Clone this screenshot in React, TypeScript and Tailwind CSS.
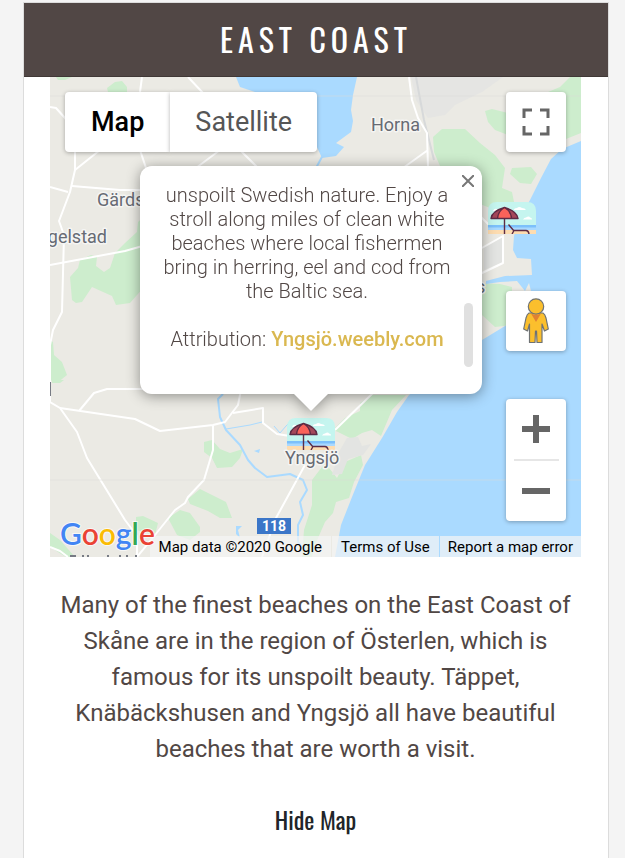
import React from "react";

const narrow = "font-['Oswald','Liberation_Sans_Narrow','Roboto_Condensed',sans-serif]";

function BeachMarker({ x, y }: { x: number; y: number }) {
  return (
    <svg x={x} y={y} width="48" height="32" viewBox="0 0 48 32">
      <path d="M0 32V9Q0 0 9 0H39Q48 0 48 9V32Z" fill="#c5f5ef" />
      <path d="M0 23H48V28H0Z" fill="#7cc0fb" />
      <path d="M0 25.500H48V28H0Z" fill="#a9d9ff" />
      <path d="M0 28H48V32H0Z" fill="#fddcb0" />
      <path d="M26 8q0-2 3-2q2-2 5 0q3 0 4 2zM35 17.500q1-2 3-2q3-2 4 0q2 0 2 2zM5 9q1-3 4-2l3 2z" fill="#fff" />
      <path d="M3 16.500Q4 9 16.500 5.500Q29 9 30 16.500Z" fill="#dd5a52" />
      <path d="M3 16.500Q4 9 16.500 5.500Q8 10 9.500 16.500ZM30 16.500Q29 9 16.500 5.500Q25 10 23.500 16.500Z" fill="#a4475a" />
      <path d="M9.500 16.500Q10 9 16.500 5.500Q23 9 23.500 16.500Z" fill="#f9625a" />
      <g fill="none" stroke="#5d2b45" strokeWidth="1.400" strokeLinejoin="round">
        <path d="M3 16.500Q4 9 16.500 5.500Q29 9 30 16.500ZM9.500 16.500Q10 9 16.500 5.500Q23 9 23.500 16.500" />
        <path d="M16.500 16V32M20.500 22.500L26 29M24 32L26 28.500H38Q40.500 28.500 41 32" />
      </g>
    </svg>
  );
}

function MapCanvas() {
  return (
    <svg
      className="absolute inset-0 h-full w-full"
      viewBox="50 77 531 480"
      preserveAspectRatio="xMinYMin slice"
      role="img"
      aria-label="Map of beaches around Yngsjö"
    >
      <rect x="50" y="77" width="1200" height="900" fill="#ebeae4" />
      <path d="M411 77H503L482 92L455 105L445 115L428 118L416 100Z" fill="#e5e5e3" />
      <g fill="#cdedcd">
        <path d="M570 77L560 87L548 92L540 100L545 125L566 139L581 133V77Z" />
        <path d="M485 111L492 109L508 113V135L495 130L488 122Z" />
        <path d="M433 137L442 129L465 129L480 143L495 155L505 168L502 188L512 192L514 202L508 208H490L470 200V166H440L434 152Z" />
        <path d="M512 168L531 167L537 174L531 184L520 183L510 174Z" />
        <path d="M476 283L500 284L512 287V325L495 327L482 315Z" />
        <path d="M146 215L138 222L137 232L125 243L115 253L110 268L104 272L96 266L97 257L91 255L80 260L78 268L70 277L72 300L76 303L82 302L92 287L112 296L116 305L130 303L137 295L146 285Z" />
        <path d="M50 340L53 342L54 355L62 362L67 375L57 383L50 380Z" />
        <path d="M107 88L115 82L122 81L127 87V92H108ZM56 77H72L65 80H58ZM52 380H64L60 383H52Z" />
        <path d="M204 442L212 440L220 449L230 453L243 449L240 458L232 467L217 468L212 458L204 452Z" />
        <path d="M188 499L200 489L210 494L226 502L232 518L220 518L208 511L190 504Z" />
        <path d="M168 518L180 510L190 513L200 527V532L190 540L177 535Z" />
        <path d="M136 517L143 516L158 523L155 535L136 530ZM50 533L60 540L75 557H66L50 547Z" />
        <path d="M372 395H406L392 410L381 436L372 430L362 433L352 439L338 432L333 430L345 418L360 411L360 403Z" />
        <path d="M325 463L337 478L345 462L361 455L363 465L354 482L349 498L336 502L333 513L325 522L315 545L312 557H302L304 530L312 505L312 480Z" />
      </g>
      <path d="M339 452L347 438L358 437L362 446L371 444L363 455L348 459L342 474L332 475Z" fill="#e3e4e2" />
      <g fill="#aadaff">
        <path d="M236 77L240 87L255 92L305 110L316 145L322 158L336 156L344 147L336 143L351 132L353 121L351 110L353 95L357 77Z" />
        <path d="M581 141L562 149L551 159L541 178L530 200L519 220L514 236L513 250L517 258L531 259L532 275L505 276L486 281L486 284L500 282L517 281L525 291L529 283L531 291L510 323L482 340L409 395L397 412L382 438L365 465L352 497L341 525L335 557H1250V141Z" />
        <path d="M254 451L260 449L259 453ZM236 526L242 526L238 530L240 538L236 534Z" />
      </g>
      <g fill="none" stroke="#aadaff" strokeWidth="2" strokeLinejoin="round">
        <path d="M323 155L316 168M223 394L218 399L220 417L226 430L240 445L248 460L255 468L267 477L290 474L303 480L307 490L300 502L303 515L298 525L298 542L305 550" />
        <path d="M226 429L250 425L262 422M274 426L280 433L286 426L292 420" strokeWidth="1" />
      </g>
      <path d="M484 248L503 237V262L484 270Z" fill="#e3e4e2" />
      <path d="M416 77L424 120L434 160" fill="none" stroke="#d7d9da" strokeWidth="2" />
      <g fill="none" stroke="#fff" strokeWidth="2" strokeLinejoin="round">
        <path d="M75 150V170L70 192L59 221L64 235L62 312L53 330L50 345V402L60 408L77 432L87 458L125 520L137 536V557" />
        <path d="M100 150L75 170M50 187L68 192M72 186L120 190H146M140 150L146 168M220 150L196 168M240 150L258 168" />
        <path d="M50 265L125 251L146 245M50 107L56 108L65 118L70 126M142 77L140 92M188 77L203 93" />
        <path d="M60 408L135 419L160 431L213 425L225 422L238 405L241 390M79 411L94 393L107 389H146M213 425V450L204 480L188 497L185 503L175 510L155 535L137 557" />
        <path d="M233 413L263 408V423L277 434L290 436M305 465L276 518L262 557M376 390L335 430M50 547L60 551L68 557" />
        <path d="M409 77L412 100L418 118L427 133L428 168M428 150L403 168M480 216L490 226M480 249L503 236V263L480 274" />
      </g>
      <path d="M50 96H581M50 480H581" stroke="#dddeda" strokeOpacity=".5" />
      <path d="M50 382V396" stroke="#777b84" strokeWidth="2" />
      <path d="M70 556H76M83 555V557M88 555V557M108 555V557M120 555V557M127 555V557M136 555V557" stroke="#777b84" strokeWidth="2" />
      <BeachMarker x={488} y={202} />
      <BeachMarker x={287} y={418} />
      <g
        className="font-['Roboto',sans-serif]"
        fontSize="18"
        fill="#676b74"
        stroke="#f5f5f3"
        strokeWidth="3"
        strokeLinejoin="round"
        paintOrder="stroke"
      >
        <text x="97" y="206">Gärds</text>
        <text x="107" y="243" textAnchor="end">gelstad</text>
        <text x="371" y="131">Horna</text>
        <text x="285" y="464">Yngsjö</text>
        <text x="476" y="293">s</text>
      </g>
      <rect x="257" y="518" width="34" height="16" fill="#3b76c8" />
      <text x="274" y="531" textAnchor="middle" className="font-['Roboto',sans-serif] font-bold" fontSize="14" fill="#fff">
        118
      </text>
    </svg>
  );
}

function FullscreenIcon() {
  return (
    <svg width="28" height="28" viewBox="0 0 28 28" fill="none" stroke="#666" strokeWidth="3" aria-hidden="true">
      <path d="M2 10V2H10M18 2H26V10M26 18V26H18M10 26H2V18" />
    </svg>
  );
}

function PegmanIcon() {
  return (
    <svg width="26" height="46" viewBox="0 0 26 46" aria-hidden="true">
      <g fill="#fbbf2d" stroke="#6f7273" strokeWidth="1.200" strokeLinejoin="round">
        <path d="M6 15H20Q22 16 23 20L25.300 31L21.500 33L19 26V44.500H14L13.500 33H12.500L12 44.500H6.500V26L4.500 33L.700 31L3 20Q4 16 6 15Z" />
        <circle cx="13" cy="8.500" r="7.700" />
      </g>
      <path d="M8 15.500Q13 18 18 15.500L13 24Z" fill="#e08132" />
    </svg>
  );
}

const control = "flex items-center justify-center bg-white shadow-[0_1px_4px_rgba(0,0,0,0.3)]";

function InfoWindow() {
  return (
    <div className="absolute left-[90px] top-[89px] w-[342px] drop-shadow-[0_2px_7px_rgba(0,0,0,0.4)]">
      <div className="flex h-[228px] rounded-xl bg-white pt-[17px]">
        <div className="flex-1 overflow-hidden pl-5 text-center font-['Roboto',sans-serif] text-xl/6 font-light text-[#514745]">
          <p>
            unspoilt Swedish nature. Enjoy a stroll along miles of clean white beaches where local fishermen bring in
            herring, eel and cod from the Baltic sea.
          </p>
          <p className="mt-6">
            Attribution:{" "}
            <a href="#yngsjo" className="font-medium text-[#dab850]">
              Yngsjö.weebly.com
            </a>
          </p>
        </div>
        <div className="flex w-7 flex-col items-center">
          <div className="mt-[120px] h-16 w-[9px] rounded-full bg-[#e0e0e0]" />
        </div>
      </div>
      <button type="button" aria-label="Close" className="absolute right-[7px] top-2 p-px">
        <svg width="12" height="12" viewBox="0 0 12 12" stroke="#777" strokeWidth="2" className="block" aria-hidden="true">
          <path d="M0 0L12 12M12 0L0 12" />
        </svg>
      </button>
      <svg width="34" height="17" viewBox="0 0 34 17" className="mx-auto block" aria-hidden="true">
        <path d="M0 0H34L17 17Z" fill="#fff" />
      </svg>
    </div>
  );
}

function BeachMap() {
  return (
    <div className="relative h-[480px] overflow-hidden font-['Roboto',sans-serif]">
      <MapCanvas />
      <InfoWindow />

      <div className="absolute left-[15px] top-[15px] flex h-[60px] text-[27px]">
        <button type="button" className={`${control} rounded-l-sm px-[26px] font-medium text-black`}>
          Map
        </button>
        <button type="button" className={`${control} rounded-r-sm px-[25px] text-[#565656]`}>
          Satellite
        </button>
      </div>

      <button type="button" aria-label="Toggle fullscreen view" className={`${control} absolute right-[15px] top-[15px] size-[60px] rounded-sm`}>
        <FullscreenIcon />
      </button>

      <div className="absolute bottom-9 right-[15px] flex w-[60px] flex-col gap-12">
        <button type="button" aria-label="Street View" className={`${control} h-[60px] rounded-sm`}>
          <PegmanIcon />
        </button>
        <div className="flex flex-col items-center rounded-sm bg-white shadow-[0_1px_4px_rgba(0,0,0,0.3)]">
          <button type="button" aria-label="Zoom in" className="flex h-[60px] w-full items-center justify-center">
            <svg width="28" height="28" viewBox="0 0 28 28" stroke="#666" strokeWidth="6" aria-hidden="true">
              <path d="M0 14H28M14 0V28" />
            </svg>
          </button>
          <div className="h-[2px] w-[45px] bg-[#e6e6e6]" />
          <button type="button" aria-label="Zoom out" className="flex h-[60px] w-full items-center justify-center">
            <svg width="28" height="28" viewBox="0 0 28 28" stroke="#666" strokeWidth="6" aria-hidden="true">
              <path d="M0 14H28" />
            </svg>
          </button>
        </div>
      </div>

      <div className="absolute bottom-0 right-0 flex h-[21px] gap-px text-[15px]/[23px] text-black">
        <span className="bg-[#f5f5f5]/70 px-[9px]">Map data ©2020 Google</span>
        <a href="#terms" className="bg-[#f5f5f5]/70 px-[9px]">
          Terms of Use
        </a>
        <a href="#report" className="bg-[#f5f5f5]/70 px-2">
          Report a map error
        </a>
      </div>

      <a href="#google-maps" aria-label="Google" className="absolute bottom-0 left-[10px]">
        <svg width="96" height="42" viewBox="0 0 96 42" className="block" aria-hidden="true">
          <text
            y="30"
            className="font-['Lato',sans-serif] font-semibold"
            fontSize="30"
            stroke="#fff"
            strokeOpacity=".7"
            strokeWidth="2"
            paintOrder="stroke"
          >
            <tspan fill="#4285f4">G</tspan>
            <tspan fill="#ea4335">o</tspan>
            <tspan fill="#fbbc05">o</tspan>
            <tspan fill="#4285f4">g</tspan>
            <tspan fill="#34a853">l</tspan>
            <tspan fill="#ea4335">e</tspan>
          </text>
        </svg>
      </a>
    </div>
  );
}

export default function App() {
  return (
    <main className="min-h-screen bg-[#f4f4f4] pl-[23px] pr-4 pt-[2px]">
      <section className="min-h-[856px] border border-b-0 border-[#dcdcdc] bg-white pb-5">
        <header className="flex h-[74px] items-center justify-center border-b border-[#403836] bg-[#514745] pb-[2px]">
          <h2 className={`${narrow} text-[32px] tracking-[5px] text-white`}>EAST COAST</h2>
        </header>
        <div className="pl-[26px] pr-[27px] text-center">
          <BeachMap />
          <p className="mt-[30px] font-['Roboto',sans-serif] text-2xl/9 text-[#514745]">
            Many of the finest beaches on the East Coast of Skåne are in the region of Österlen, which is famous for its
            unspoilt beauty. Täppet, Knäbäckshusen and Yngsjö all have beautiful beaches that are worth a visit.
          </p>
          <button type="button" className={`${narrow} mt-[34px] text-2xl/9 text-[#212529]`}>
            Hide Map
          </button>
        </div>
      </section>
    </main>
  );
}
